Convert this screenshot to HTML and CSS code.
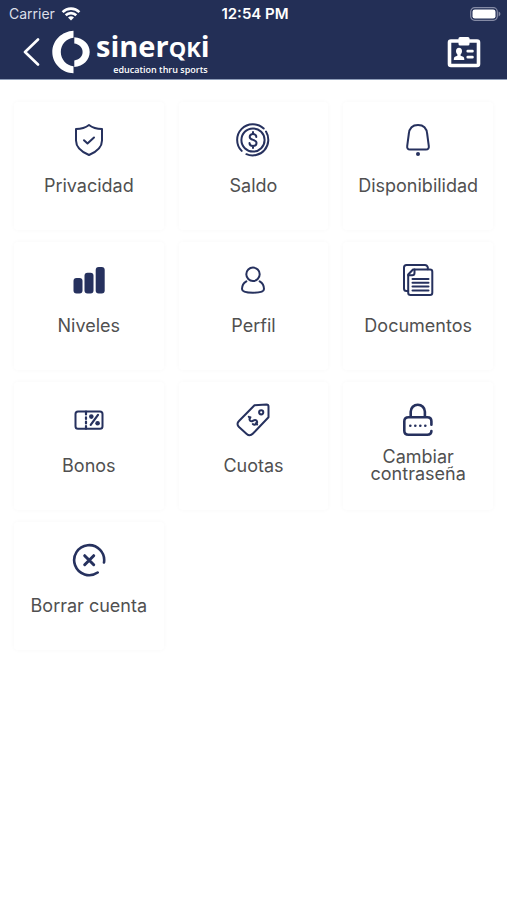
FILE: index.html
```html
<!DOCTYPE html>
<html lang="es">
<head>
<meta charset="utf-8">
<meta name="viewport" content="width=device-width, initial-scale=1">
<title>sinerqki</title>
<link rel="stylesheet" href="styles.css">
</head>
<body>
<header class="header">
  <div class="status">
    <div class="carrier">
      <span>Carrier</span>
      <svg width="20" height="14" viewBox="0 0 20 14" fill="none" stroke="#fff" stroke-width="2.6" aria-hidden="true">
        <path d="M1.6 5.1a12 12 0 0 1 16.8 0M4.7 8.3a7.6 7.6 0 0 1 10.6 0"/>
        <path d="M10 13.6 7 10.6a4.3 4.3 0 0 1 6 0z" fill="#fff" stroke="none"/>
      </svg>
    </div>
    <span class="time">12:54 PM</span>
    <svg class="battery" width="31" height="14" viewBox="0 0 31 14" aria-hidden="true">
      <rect x=".7" y=".7" width="26.6" height="12.6" rx="4" fill="none" stroke="#858ba5" stroke-width="1.2"/>
      <rect x="2.5" y="2.4" width="23" height="9.2" rx="2.4" fill="#fff"/>
      <path d="M28.6 4.6c2.4.8 2.4 4 0 4.8z" fill="#858ba5"/>
    </svg>
  </div>
  <div class="nav">
    <button class="icon-button" type="button" aria-label="Volver">
      <svg width="18" height="28" viewBox="0 0 18 28" fill="none" stroke="#fff" stroke-width="2.6" stroke-linecap="round" stroke-linejoin="round"><path d="M16 1.500 3 14l13 12.500"/></svg>
    </button>
    <a class="brand" href="#">
      <svg width="38" height="44" viewBox="0 0 38 44" fill="#fff" aria-hidden="true">
        <path d="M21.500 .7v7.100C14.500 8.500 8.800 14.500 8.800 22s5.700 13.500 12.700 14.200v7.100C10 42.800 .3 33.600 .3 22S10 1.200 21.500 .7z"/>
        <path d="M22.300 7.300C31.400 8 37.700 14.200 37.700 22S31.400 36.500 22.300 37v-6.600c4.700-.6 8.300-3.900 8.300-8.400s-3.600-7.800-8.300-8.400z"/>
      </svg>
      <span class="wordmark">
        <span class="name">siner<span class="caps">QK</span>i</span>
        <span class="tagline">education thru sports</span>
      </span>
    </a>
    <button class="icon-button badge" type="button" aria-label="Credencial">
      <svg width="34" height="32" viewBox="0 0 34 32">
        <rect x="2.500" y="5" width="29" height="24.500" rx="1.500" fill="none" stroke="#fff" stroke-width="3.600"/>
        <rect x="11.500" y="1" width="11" height="8.500" rx="1.500" fill="#fff"/>
        <path d="M12 11.800c2 0 3 1.400 3 3.300 0 1.500-.6 2.500-1.400 3.300v1.400l2.600 1c.8.4 1.100 1.200 1.100 3.200H6.800c0-2 .3-2.800 1.100-3.200l2.500-1v-1.400C9.600 17.600 9 16.600 9 15.100c0-1.900 1-3.300 3-3.300z" fill="#fff"/>
        <path d="M20.800 15.200h4.600M20.800 21.200h4.600" stroke="#fff" stroke-width="2.800" stroke-linecap="round"/>
      </svg>
    </button>
  </div>
</header>
<main class="grid">
  <a class="card" href="#">
    <svg class="icon" viewBox="0 0 36 36"><path d="M18 3c3.400 2.700 8 4 13 4v11.500c0 6.500-5 11.200-13 14.500C10 29.700 5 25 5 18.500V7c5 0 9.600-1.300 13-4z"/><path d="m13 18.200 3.500 3.300 6.500-6"/></svg>
    <span class="label">Privacidad</span>
  </a>
  <a class="card" href="#">
    <svg class="icon" viewBox="0 0 36 36"><circle cx="18" cy="18" r="11.600"/><path d="M28.700 6.500A15.700 15.700 0 0 0 6.700 28.900M31 9.600a15.700 15.700 0 0 1-19.600 22.600"/><path d="M21.300 15c0-2-1.300-2.900-3.300-2.900s-3.300 1.100-3.300 2.800c0 3.700 6.800 2.300 6.800 6 0 1.900-1.500 3-3.500 3s-3.500-1-3.500-3M18 9.900v2.200M18 23.900v2.200"/></svg>
    <span class="label">Saldo</span>
  </a>
  <a class="card" href="#">
    <svg class="icon" viewBox="0 0 36 36"><path d="M18 3C12 3 9.300 6.700 8.800 12L7.200 24.200c-.3 2.200.7 3.400 2.800 3.400h16c2.100 0 3.100-1.200 2.800-3.400L27.200 12C26.700 6.700 24 3 18 3z"/><circle class="solid" cx="18" cy="32" r="2"/></svg>
    <span class="label">Disponibilidad</span>
  </a>
  <a class="card" href="#">
    <svg class="icon" viewBox="0 0 36 36"><g class="solid"><rect x="2.500" y="16" width="9" height="15.500" rx="3"/><rect x="13.500" y="10.700" width="9" height="20.800" rx="3"/><rect x="24.700" y="5" width="9" height="26.500" rx="3"/></g></svg>
    <span class="label">Niveles</span>
  </a>
  <a class="card" href="#">
    <svg class="icon" viewBox="0 0 36 36"><circle cx="18" cy="12.300" r="6.700"/><path d="M11.300 19.300C8.500 21 7 24 7 27c0 2.400 4.700 3.700 11 3.700S29 29.400 29 27c0-3-1.500-6-4.300-7.700"/></svg>
    <span class="label">Perfil</span>
  </a>
  <a class="card" href="#">
    <svg class="icon" viewBox="0 0 36 36"><path d="M13 7.500H30c1.500 0 2.300.8 2.300 2.300v21c0 1.500-.8 2.300-2.300 2.300H10.500c-1.500 0-2.300-.8-2.300-2.300V12.500z"/><path d="M14.500 7.500V11c0 1.500-.8 2.300-2.300 2.300h-4M8.200 29H6.500C5 29 4 28 4 26.500v-21C4 4 5 3 6.500 3H25c1.500 0 2.300.8 2.800 2.300v2"/><path d="M12.500 17h16M12.500 20.800h16M12.500 24.600h16M12.500 28.400h16"/></svg>
    <span class="label">Documentos</span>
  </a>
  <a class="card" href="#">
    <svg class="icon" viewBox="0 0 36 36"><rect x="4.500" y="9.500" width="27" height="17.200" rx="2.500"/><path d="M15 9.500v3M15 15.300v1.600M15 19.600v1.800M15 24v2.700M27 12.800l-7.300 10" stroke-width="2.200"/><circle class="solid" cx="20.300" cy="14.600" r="2.300"/><circle class="solid" cx="26.600" cy="21.300" r="2.300"/></svg>
    <span class="label">Bonos</span>
  </a>
  <a class="card" href="#">
    <svg class="icon" viewBox="0 0 36 36"><path d="M19.500 3.200 31.500 2.500c1.300 0 2 .7 2 2v10.800L18 31.500c-2 2.100-4.300 2.300-6.300.5L4 25c-2-1.900-2-4 0-6z"/><circle cx="26.200" cy="10.300" r="2.100"/><path d="M15.400 15.200c-1.200 1.200-1.200 2.500-.2 3.500 2.500 2.300 3.700-2.600 6.200-.2 1 1.100.9 2.400-.2 3.500-1.100 1-2.300 1.100-3.400.1M13.800 14.800l1.300 1.200M20.800 21.300l1.300 1.200"/></svg>
    <span class="label">Cuotas</span>
  </a>
  <a class="card" href="#">
    <svg class="icon bold" viewBox="0 0 36 36"><path d="M10.700 15.200V9.800a7.100 7.100 0 0 1 14.200 0v5.400M31.400 22.800v-3.600c0-2.700-1.500-4-4.200-4H8.500c-2.700 0-4.200 1.300-4.200 4v9.600c0 2.700 1.500 4 4.200 4h18.700c2.700 0 4.200-1.200 4.200-3.700"/><g class="solid"><circle cx="10.300" cy="23.700" r="1.300"/><circle cx="15.300" cy="23.700" r="1.300"/><circle cx="20.300" cy="23.700" r="1.300"/><circle cx="25.300" cy="23.700" r="1.300"/></g></svg>
    <span class="label">Cambiar contraseña</span>
  </a>
  <a class="card" href="#">
    <svg class="icon bold" viewBox="0 0 36 36"><path d="M33 20.500A15 15 0 1 0 26.700 30.500"/><path d="m13.700 13.700 9 9M22.700 13.700l-9 9" stroke-width="3"/></svg>
    <span class="label">Borrar cuenta</span>
  </a>
</main>
</body>
</html>
```
FILE: styles.css
```css
* { box-sizing: border-box; }

body {
  margin: 0;
  background: #fff;
  color: #505050;
  font-family: Inter, "Liberation Sans", sans-serif;
}

.header {
  background: #232f56;
  border-bottom: 1px solid #8e9db8;
  color: #fff;
}

.status {
  display: grid;
  grid-template-columns: 1fr auto 1fr;
  align-items: center;
  height: 27px;
  padding: 0 6px 0 9px;
  font-size: 14px;
}

.carrier {
  display: flex;
  align-items: center;
  gap: 6px;
  color: #dcdfe8;
}

.time {
  font-size: 15px;
  font-weight: 600;
}

.battery { justify-self: end; }

.nav {
  display: flex;
  align-items: center;
  height: 52px;
  padding: 0 26px 2px 22px;
}

.icon-button {
  display: flex;
  padding: 0;
  border: 0;
  background: none;
  cursor: pointer;
}

.badge { margin-left: auto; }

.brand {
  display: flex;
  align-items: center;
  gap: 6px;
  margin-left: 12px;
  color: #fff;
  text-decoration: none;
  font-family: "Open Sans", "Noto Sans", sans-serif;
  font-weight: 700;
}

.wordmark {
  display: flex;
  flex-direction: column;
  align-items: flex-end;
}

.name {
  font-size: 29px;
  line-height: 34px;
}

.caps { font-size: 22px; }

.tagline {
  padding-right: 2px;
  font-size: 9px;
  font-weight: 600;
  line-height: 10px;
}

.grid {
  display: grid;
  grid-template-columns: repeat(3, 1fr);
  gap: 12px 15px;
  padding: 22px 14px;
}

.card {
  display: flex;
  flex-direction: column;
  align-items: center;
  gap: 10px;
  min-height: 128px;
  padding: 20px 12px;
  border-radius: 4px;
  box-shadow: 0 0 5px rgba(0, 0, 0, 0.03);
  color: inherit;
  text-decoration: none;
}

.icon {
  width: 36px;
  height: 36px;
  fill: none;
  stroke: #26315e;
  stroke-width: 2;
  stroke-linecap: round;
  stroke-linejoin: round;
}

.icon.bold { stroke-width: 2.6; }

.icon .solid {
  fill: #26315e;
  stroke: none;
}

.label {
  display: flex;
  align-items: center;
  min-height: 34px;
  font-size: 18px;
  line-height: 17px;
  text-align: center;
}
```
